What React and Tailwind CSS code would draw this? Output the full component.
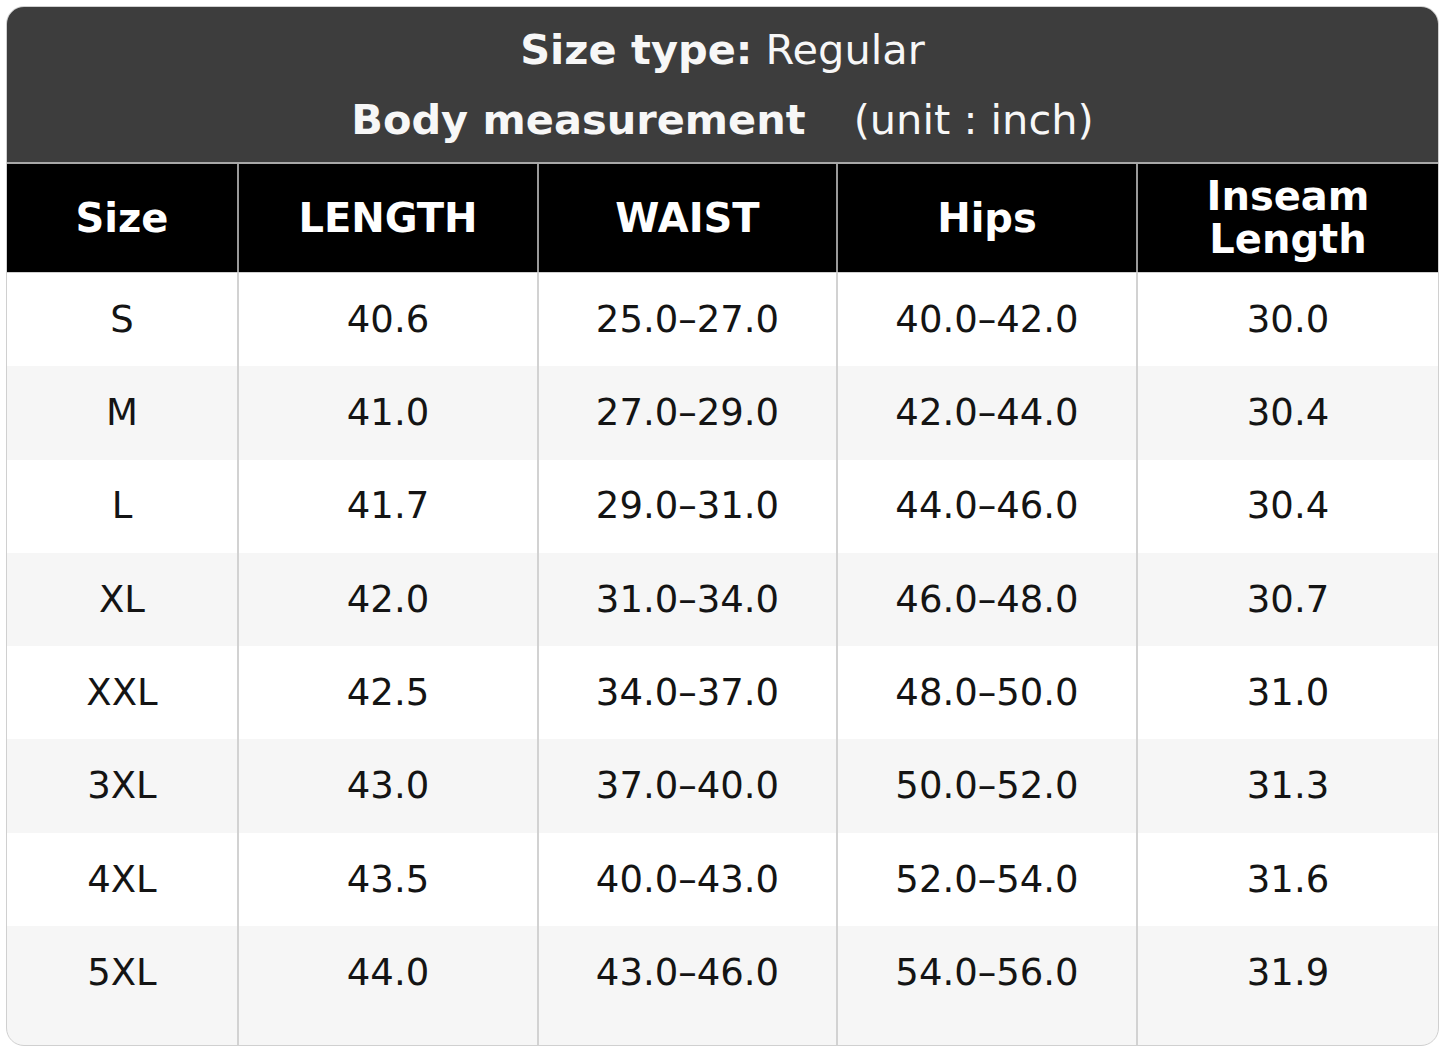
import React from "react";

const rows = [
  ["S", "40.6", "25.0–27.0", "40.0–42.0", "30.0"],
  ["M", "41.0", "27.0–29.0", "42.0–44.0", "30.4"],
  ["L", "41.7", "29.0–31.0", "44.0–46.0", "30.4"],
  ["XL", "42.0", "31.0–34.0", "46.0–48.0", "30.7"],
  ["XXL", "42.5", "34.0–37.0", "48.0–50.0", "31.0"],
  ["3XL", "43.0", "37.0–40.0", "50.0–52.0", "31.3"],
  ["4XL", "43.5", "40.0–43.0", "52.0–54.0", "31.6"],
  ["5XL", "44.0", "43.0–46.0", "54.0–56.0", "31.9"],
];

const cols = "grid grid-cols-[230px_300px_299px_300px_1fr]";

export default function App() {
  return (
    <div className="w-[1445px] h-[1062px] bg-white p-[6px] font-['DejaVu_Sans',sans-serif]">
      <div className="w-[1433px] h-[1040px] rounded-[18px] border border-[#d0d0d0] overflow-hidden bg-[#f6f6f6] flex flex-col">
        <div className="h-[157px] bg-[#3d3d3d] flex flex-col justify-center items-center text-[#f7f7f7] text-[41.5px] leading-[70px] border-b-2 border-[#a8a8a8]">
          <div>
            <span className="font-bold">Size type:</span> Regular
          </div>
          <div className="flex">
            <span className="font-bold">Body measurement</span>
            <span className="ml-[48px]">(unit : inch)</span>
          </div>
        </div>
        <div className={`${cols} h-[108px] bg-black text-white font-bold text-[40px] leading-[43px]`}>
          {["Size", "LENGTH", "WAIST", "Hips", "Inseam Length"].map((h, i) => (
            <div
              key={h}
              className={`flex items-center justify-center text-center ${i > 0 ? "border-l-2 border-[#9a9a9a]" : ""} ${i === 4 ? "px-[60px]" : ""}`}
            >
              {h}
            </div>
          ))}
        </div>
        <div className="flex-1 flex flex-col border-t border-[#cfcfcf]">
          {rows.map((r, ri) => (
            <div
              key={r[0]}
              className={`${cols} h-[93.3px] shrink-0 ${ri % 2 === 0 ? "bg-white" : "bg-[#f6f6f6]"} text-[#141414] text-[37px]`}
            >
              {r.map((c, ci) => (
                <div
                  key={ci}
                  className={`flex items-center justify-center ${ci > 0 ? "border-l-2 border-[#d2d2d2]" : ""}`}
                >
                  {c}
                </div>
              ))}
            </div>
          ))}
          <div className={`${cols} flex-1`}>
            <div />
            <div className="border-l-2 border-[#d2d2d2]" />
            <div className="border-l-2 border-[#d2d2d2]" />
            <div className="border-l-2 border-[#d2d2d2]" />
            <div className="border-l-2 border-[#d2d2d2]" />
          </div>
        </div>
      </div>
    </div>
  );
}
